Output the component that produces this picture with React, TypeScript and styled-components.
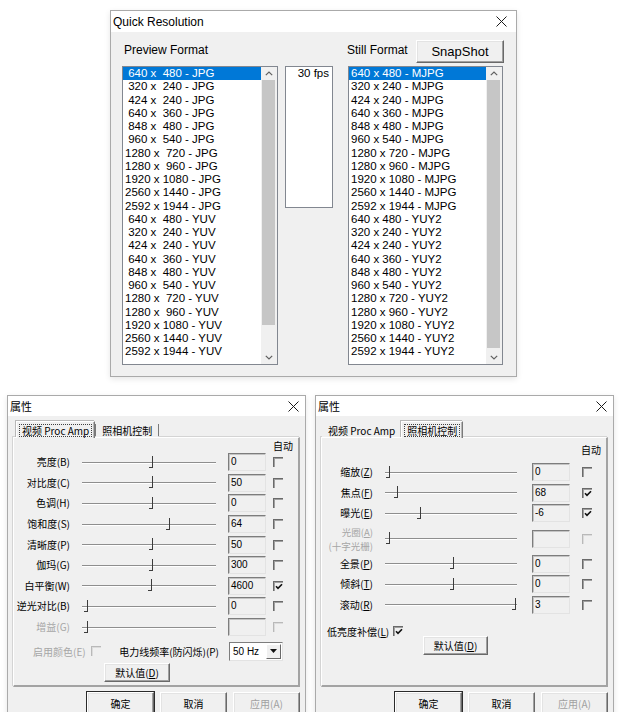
import React from 'react';
import styled, { createGlobalStyle } from 'styled-components';

const LATIN = `"Liberation Sans", "Noto Sans CJK SC", sans-serif`;
const CJK = `"Noto Sans CJK SC", "Liberation Sans", sans-serif`;

const GlobalStyle = createGlobalStyle`
  html, body {
    margin: 0;
    padding: 0;
    background: #ffffff;
  }
  body {
    width: 619px;
    height: 712px;
    overflow: hidden;
    font-family: ${LATIN};
    color: #000;
  }
`;

// ---------- page layout ----------
const Page = styled.div`
  display: flex;
  flex-direction: column;
  padding-top: 10px;
`;

const TopRow = styled.div`
  padding-left: 110px;
`;

const BottomRow = styled.div`
  display: flex;
  gap: 9px;
  padding-left: 7px;
  margin-top: 18px;
`;

// ---------- window chrome ----------
const Window = styled.div<{ $w: number; $h: number }>`
  width: ${(p) => p.$w}px;
  height: ${(p) => p.$h}px;
  box-sizing: border-box;
  flex: none;
  border: 1px solid #aaaaaa;
  background: #f0f0f0;
  display: flex;
  flex-direction: column;
  overflow: hidden;
  box-shadow: 0 2px 6px rgba(0, 0, 0, 0.1);
`;

const TitleBar = styled.div<{ $h: number; $cjk?: boolean; $pr: number }>`
  flex: none;
  height: ${(p) => p.$h}px;
  background: #ffffff;
  display: flex;
  align-items: center;
  justify-content: space-between;
  padding: 0 ${(p) => p.$pr}px 0 2px;
  font-family: ${(p) => (p.$cjk ? CJK : LATIN)};
  font-size: ${(p) => (p.$cjk ? 11 : 12)}px;
`;

const CloseIcon = () => (
  <svg width="11" height="11" viewBox="0 0 11 11">
    <path d="M0.5 0.5L10.5 10.5M10.5 0.5L0.5 10.5" stroke="#1a1a1a" strokeWidth="1" fill="none" />
  </svg>
);

// raised classic button
const WinButton = styled.div<{ $w: number; $h: number; $ml?: number; $def?: boolean; $dis?: boolean; $cjk?: boolean }>`
  flex: none;
  width: ${(p) => p.$w}px;
  height: ${(p) => p.$h}px;
  margin-left: ${(p) => (p.$ml === undefined ? 0 : p.$ml)}px;
  box-sizing: border-box;
  display: flex;
  align-items: center;
  justify-content: center;
  background: #f0f0f0;
  border: 1px solid;
  border-color: #ffffff #696969 #696969 #ffffff;
  box-shadow: inset -1px -1px 0 #a0a0a0, inset 1px 1px 0 #e3e3e3;
  outline: ${(p) => (p.$def ? '1px solid #2a2a2a' : 'none')};
  color: ${(p) => (p.$dis ? '#a0a0a0' : '#000')};
  font-family: ${(p) => (p.$cjk ? CJK : LATIN)};
  font-size: ${(p) => (p.$cjk ? 10 : 13)}px;
`;

// ---------- Quick Resolution ----------
const QuickBody = styled.div`
  display: flex;
  flex-direction: column;
  padding: 8px 12px 0 11px;
`;

const QuickHeader = styled.div`
  display: flex;
  align-items: center;
  height: 23px;
  font-size: 12px;
`;

const HeaderLabel = styled.span<{ $w?: number }>`
  box-sizing: border-box;
  width: ${(p) => (p.$w ? `${p.$w}px` : 'auto')};
  padding-left: ${(p) => (p.$w ? 2 : 0)}px;
  margin-top: -3px;
`;

const ListsRow = styled.div`
  display: flex;
  align-items: flex-start;
  margin-top: 3px;
`;

const ListBox = styled.div<{ $w: number; $h: number; $ml?: number }>`
  flex: none;
  width: ${(p) => p.$w}px;
  height: ${(p) => p.$h}px;
  margin-left: ${(p) => p.$ml || 0}px;
  box-sizing: border-box;
  border: 1px solid #828790;
  background: #ffffff;
  display: flex;
  overflow: hidden;
`;

const ListItems = styled.div`
  flex: 1;
  overflow: hidden;
  font-size: 11.5px;
`;

const ListItem = styled.div<{ $sel?: boolean }>`
  height: 13.25px;
  line-height: 13.25px;
  white-space: pre;
  padding-left: 2px;
  background: ${(p) => (p.$sel ? '#0078d7' : 'transparent')};
  color: ${(p) => (p.$sel ? '#ffffff' : '#000000')};
`;

const FpsText = styled.div`
  flex: 1;
  text-align: right;
  padding-right: 3px;
  font-size: 11.5px;
  line-height: 13.25px;
`;

const ScrollBar = styled.div`
  flex: none;
  width: 16px;
  background: #f0f0f0;
  display: flex;
  flex-direction: column;
`;

const ScrollArrow = styled.div<{ $h: number }>`
  flex: none;
  height: ${(p) => p.$h}px;
  display: flex;
  align-items: center;
  justify-content: center;
`;

const ScrollThumb = styled.div<{ $h: number }>`
  flex: none;
  height: ${(p) => p.$h}px;
  margin: 0 2px 0 1px;
  background: #c6c6c6;
`;

const ScrollGap = styled.div`
  flex: 1;
`;

const Chevron = ({ up }: { up?: boolean }) => (
  <svg width="8" height="5" viewBox="0 0 8 5">
    <polyline
      points={up ? '0.8,4.2 4,1 7.2,4.2' : '0.8,0.8 4,4 7.2,0.8'}
      fill="none"
      stroke="#606060"
      strokeWidth="1.2"
    />
  </svg>
);

const sizes: [string, string][] = [
  ['640', '480'],
  ['320', '240'],
  ['424', '240'],
  ['640', '360'],
  ['848', '480'],
  ['960', '540'],
  ['1280', '720'],
  ['1280', '960'],
  ['1920', '1080'],
  ['2560', '1440'],
  ['2592', '1944'],
];

const previewFormats = [
  ...sizes.map(([w, h]) => `${w.padStart(4)} x ${h.padStart(4)} - JPG`),
  ...sizes.map(([w, h]) => `${w.padStart(4)} x ${h.padStart(4)} - YUV`),
];

const stillFormats = [
  ...sizes.map(([w, h]) => `${w} x ${h} - MJPG`),
  ...sizes.map(([w, h]) => `${w} x ${h} - YUY2`),
];

const FormatList = ({ items, w, ml, thumb }: { items: string[]; w: number; ml?: number; thumb: number }) => (
  <ListBox $w={w} $h={299} $ml={ml}>
    <ListItems>
      {items.map((t, i) => (
        <ListItem key={t} $sel={i === 0}>
          {t}
        </ListItem>
      ))}
    </ListItems>
    <ScrollBar>
      <ScrollArrow $h={13}>
        <Chevron up />
      </ScrollArrow>
      <ScrollThumb $h={thumb} />
      <ScrollGap />
      <ScrollArrow $h={14}>
        <Chevron />
      </ScrollArrow>
    </ScrollBar>
  </ListBox>
);

const QuickResolution = () => (
  <Window $w={407} $h={367}>
    <TitleBar $h={21} $pr={9}>
      <span>Quick Resolution</span>
      <CloseIcon />
    </TitleBar>
    <QuickBody>
      <QuickHeader>
        <HeaderLabel $w={225}>Preview Format</HeaderLabel>
        <HeaderLabel>Still Format</HeaderLabel>
        <WinButton $w={88} $h={23} style={{ marginLeft: 'auto' }}>
          SnapShot
        </WinButton>
      </QuickHeader>
      <ListsRow>
        <FormatList items={previewFormats} w={156} thumb={245} />
        <ListBox $w={48} $h={142} $ml={7}>
          <FpsText>30 fps</FpsText>
        </ListBox>
        <FormatList items={stillFormats} w={155} ml={15} thumb={268} />
      </ListsRow>
    </QuickBody>
  </Window>
);

// ---------- property pages ----------
const PropBody = styled.div`
  flex: 1;
  display: flex;
  flex-direction: column;
  padding: 0 5px;
  font-family: ${CJK};
  font-size: 10px;
`;

const TabStrip = styled.div<{ $pl: number }>`
  display: flex;
  align-items: flex-end;
  height: 16px;
  margin-top: 5px;
  padding-left: ${(p) => p.$pl}px;
`;

const Tab = styled.div<{ $active?: boolean }>`
  position: relative;
  z-index: ${(p) => (p.$active ? 1 : 0)};
  height: ${(p) => (p.$active ? 17 : 14)}px;
  margin-bottom: ${(p) => (p.$active ? -1 : 0)}px;
  box-sizing: border-box;
  display: flex;
  align-items: center;
  padding: 0 2px;
  background: #f0f0f0;
  border-top: 1px solid ${(p) => (p.$active ? '#ffffff' : 'transparent')};
  border-left: 1px solid ${(p) => (p.$active ? '#ffffff' : 'transparent')};
  border-right: 1px solid ${(p) => (p.$active ? '#7a7a7a' : 'transparent')};
  box-shadow: ${(p) => (p.$active ? 'inset -1px 0 0 #b8b8b8, -1px -1px 0 #b8b8b8' : 'none')};
`;

const TabText = styled.span<{ $focus?: boolean }>`
  padding: 0 2px;
  line-height: 11px;
  white-space: nowrap;
  border: 1px dotted ${(p) => (p.$focus ? '#404040' : 'transparent')};
`;

const TabRule = styled.span`
  align-self: stretch;
  width: 1px;
  margin-top: 3px;
  background: #7a7a7a;
`;

const Panel = styled.div`
  flex: none;
  height: 250px;
  box-sizing: border-box;
  border-top: 1px solid #ffffff;
  border-left: 1px solid #ffffff;
  border-right: 2px solid #a3a3a3;
  border-bottom: 2px solid #a3a3a3;
  box-shadow: -1px -1px 0 #d4d4d4;
  display: flex;
  flex-direction: column;
`;

const AutoHeader = styled.div<{ $mt: number; $mb: number }>`
  height: 13px;
  line-height: 13px;
  padding-left: 259px;
  margin-top: ${(p) => p.$mt}px;
  margin-bottom: ${(p) => p.$mb}px;
`;

const Row = styled.div<{ $h: number }>`
  display: flex;
  align-items: center;
  height: ${(p) => p.$h}px;
`;

const RowLabel = styled.div<{ $w: number; $dis?: boolean; $tall?: boolean }>`
  flex: none;
  width: ${(p) => p.$w}px;
  text-align: right;
  white-space: nowrap;
  line-height: ${(p) => (p.$tall ? 14 : 12)}px;
  font-size: ${(p) => (p.$tall ? 9.5 : 10)}px;
  color: ${(p) => (p.$dis ? '#a6a6a6' : '#000')};
`;

const Slider = styled.div<{ $w: number }>`
  position: relative;
  flex: none;
  width: ${(p) => p.$w}px;
  height: 13px;
  margin-left: 12px;

  &::before {
    content: '';
    position: absolute;
    left: 0;
    right: 0;
    top: 6px;
    border-top: 1px solid #8e8e8e;
    border-bottom: 1px solid #ffffff;
  }
`;

const SliderThumb = styled.span<{ $x: number }>`
  position: absolute;
  left: ${(p) => p.$x - 3}px;
  top: 0;
  width: 3px;
  height: 11px;
  border-right: 1px solid #3c3c3c;
  border-bottom: 1px solid #3c3c3c;
`;

const ValueBox = styled.div<{ $ml: number }>`
  flex: none;
  width: 38px;
  height: 18px;
  margin-left: ${(p) => p.$ml}px;
  box-sizing: border-box;
  border: 1px solid;
  border-color: #7d7d7d #e3e3e3 #e3e3e3 #7d7d7d;
  box-shadow: inset 1px 1px 0 #c4c4c4;
  padding-left: 2px;
  font-family: ${LATIN};
  font-size: 10px;
  line-height: 16px;
`;

const CheckBox = styled.span<{ $ml: number; $dis?: boolean }>`
  flex: none;
  width: 10px;
  height: 10px;
  margin-left: ${(p) => p.$ml}px;
  box-sizing: border-box;
  border-top: 1px solid ${(p) => (p.$dis ? '#b9b9b9' : '#6a6a6a')};
  border-left: 1px solid ${(p) => (p.$dis ? '#b9b9b9' : '#6a6a6a')};
  box-shadow: inset 1px 1px 0 ${(p) => (p.$dis ? '#dcdcdc' : '#a0a0a0')};
  display: flex;
  align-items: center;
  justify-content: center;
`;

const CheckMark = () => (
  <svg width="8" height="7" viewBox="0 0 8 7">
    <polyline points="1,3.2 3,5.4 7,1.2" fill="none" stroke="#111" strokeWidth="1.6" />
  </svg>
);

const Check = ({ on, dis, ml }: { on?: boolean; dis?: boolean; ml: number }) => (
  <CheckBox $ml={ml} $dis={dis}>
    {on && <CheckMark />}
  </CheckBox>
);

const OptionRow = styled.div<{ $h: number; $mt: number; $pl: number; $pr: number }>`
  display: flex;
  align-items: center;
  height: ${(p) => p.$h}px;
  margin-top: ${(p) => p.$mt}px;
  padding: 0 ${(p) => p.$pr}px 0 ${(p) => p.$pl}px;
  white-space: nowrap;
`;

const OptionText = styled.span<{ $dis?: boolean; $push?: boolean }>`
  color: ${(p) => (p.$dis ? '#a6a6a6' : '#000')};
  margin-left: ${(p) => (p.$push ? 'auto' : '0')};
`;

const SelectBox = styled.div`
  flex: none;
  width: 54px;
  height: 19px;
  margin-left: 10px;
  box-sizing: border-box;
  border: 1px solid;
  border-color: #7d7d7d #e3e3e3 #e3e3e3 #7d7d7d;
  background: #ffffff;
  display: flex;
  align-items: center;
  justify-content: space-between;
  padding: 0 1px 0 3px;
  font-family: ${LATIN};
  font-size: 10px;
`;

const DropButton = styled.span`
  width: 15px;
  height: 15px;
  box-sizing: border-box;
  display: flex;
  align-items: center;
  justify-content: center;
  background: #f0f0f0;
  border: 1px solid;
  border-color: #ffffff #696969 #696969 #ffffff;
`;

const ButtonRow = styled.div`
  display: flex;
  justify-content: flex-end;
  gap: 6px;
  margin-top: 5px;
`;

type Layout = { label: number; slider: number; valueGap: number; checkGap: number; row: number };

const procLayout: Layout = { label: 56, slider: 134, valueGap: 12, checkGap: 7, row: 20.6 };
const camLayout: Layout = { label: 51, slider: 132, valueGap: 15, checkGap: 12, row: 20.5 };

type Control = {
  label: string;
  key?: string;
  sub?: string;
  x: number;
  value: string;
  auto?: boolean;
  dis?: boolean;
  tall?: boolean;
};

const procControls: Control[] = [
  { label: '亮度(B)', x: 70, value: '0' },
  { label: '对比度(C)', x: 70, value: '50' },
  { label: '色调(H)', x: 70, value: '0' },
  { label: '饱和度(S)', x: 87, value: '64' },
  { label: '清晰度(P)', x: 70, value: '50' },
  { label: '伽玛(G)', x: 70, value: '300' },
  { label: '白平衡(W)', x: 69, value: '4600', auto: true },
  { label: '逆光对比(B)', x: 5, value: '0' },
  { label: '增益(G)', x: 5, value: '', dis: true },
];

const camControls: Control[] = [
  { label: '缩放', key: 'Z', x: 4, value: '0' },
  { label: '焦点', key: 'F', x: 12, value: '68', auto: true },
  { label: '曝光', key: 'E', x: 35, value: '-6', auto: true },
  { label: '光圈', key: 'A', sub: '(十字光栅)', x: 4, value: '', dis: true, tall: true },
  { label: '全景', key: 'P', x: 68, value: '0' },
  { label: '倾斜', key: 'T', x: 68, value: '0' },
  { label: '滚动', key: 'R', x: 130, value: '3' },
];

const ControlRow = ({ c, l }: { c: Control; l: Layout }) => (
  <Row $h={c.tall ? 30 : l.row}>
    <RowLabel $w={l.label} $dis={c.dis} $tall={c.tall}>
      {c.key ? (
        <>
          {c.label}(<u>{c.key}</u>)
        </>
      ) : (
        c.label
      )}
      {c.sub && (
        <>
          <br />
          {c.sub}
        </>
      )}
    </RowLabel>
    <Slider $w={l.slider}>
      <SliderThumb $x={c.x} />
    </Slider>
    <ValueBox $ml={l.valueGap}>{c.value}</ValueBox>
    <Check ml={l.checkGap} on={c.auto} dis={c.dis} />
  </Row>
);

const DialogButtons = () => (
  <ButtonRow>
    <WinButton $w={67} $h={23} $def $cjk>
      确定
    </WinButton>
    <WinButton $w={67} $h={23} $cjk>
      取消
    </WinButton>
    <WinButton $w={67} $h={23} $dis $cjk>
      应用(A)
    </WinButton>
  </ButtonRow>
);

const PropWindow = ({ camera }: { camera?: boolean }) => (
  <Window $w={299} $h={330}>
    <TitleBar $h={20} $pr={6} $cjk>
      <span>属性</span>
      <CloseIcon />
    </TitleBar>
    <PropBody>
      <TabStrip $pl={camera ? 1 : 3}>
        <Tab $active={!camera}>
          <TabText $focus={!camera}>视频 Proc Amp</TabText>
        </Tab>
        {camera ? null : <TabRule />}
        <Tab $active={camera}>
          <TabText $focus={camera}>照相机控制</TabText>
        </Tab>
        {camera ? null : <TabRule />}
      </TabStrip>
      <Panel>
        {camera ? (
          <>
            <AutoHeader $mt={5} $mb={6}>自动</AutoHeader>
            {camControls.map((c) => (
              <ControlRow key={c.label} c={c} l={camLayout} />
            ))}
            <OptionRow $h={10} $mt={11} $pl={5} $pr={0}>
              <OptionText>
                低亮度补偿(<u>L</u>)
              </OptionText>
              <Check ml={4} on />
            </OptionRow>
            <WinButton $w={65} $h={19} $ml={101} $cjk>
              默认值(<u>D</u>)
            </WinButton>
          </>
        ) : (
          <>
            <AutoHeader $mt={1} $mb={0}>自动</AutoHeader>
            {procControls.map((c) => (
              <ControlRow key={c.label} c={c} l={procLayout} />
            ))}
            <OptionRow $h={22} $mt={3} $pl={19} $pr={15}>
              <OptionText $dis>启用颜色(E)</OptionText>
              <Check ml={5} dis />
              <OptionText $push>电力线频率(防闪烁)(P)</OptionText>
              <SelectBox>
                50 Hz
                <DropButton>
                  <svg width="7" height="4" viewBox="0 0 7 4">
                    <polygon points="0,0 7,0 3.5,4" fill="#111" />
                  </svg>
                </DropButton>
              </SelectBox>
            </OptionRow>
            <WinButton $w={66} $h={19} $ml={90} $cjk style={{ marginTop: 1 }}>
              默认值(<u>D</u>)
            </WinButton>
          </>
        )}
      </Panel>
      <DialogButtons />
    </PropBody>
  </Window>
);

const App: React.FC = () => {
  return (
    <>
      <GlobalStyle />
      <Page>
        <TopRow>
          <QuickResolution />
        </TopRow>
        <BottomRow>
          <PropWindow />
          <PropWindow camera />
        </BottomRow>
      </Page>
    </>
  );
};

export default App;
